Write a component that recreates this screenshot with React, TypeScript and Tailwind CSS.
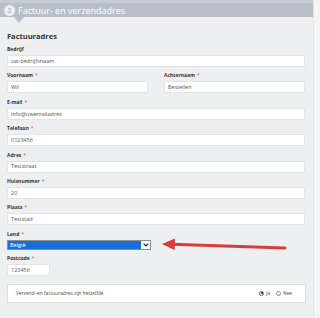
import React from "react";

const font = { fontFamily: '"Open Sans", "Liberation Sans", sans-serif' };

function Label({ text, required = true }: { text: string; required?: boolean }) {
  return (
    <div className="h-[8px] text-[5px] font-bold leading-[8px] text-[#333]">
      {text}
      {required && <span className="ml-[2px] font-normal text-[#e04848]">*</span>}
    </div>
  );
}

function Field({
  label,
  value,
  required = true,
  className = "",
}: {
  label: string;
  value: string;
  required?: boolean;
  className?: string;
}) {
  return (
    <div className={`mb-[4.4px] ${className}`}>
      <Label text={label} required={required} />
      <div className="mt-[2px] flex h-[12px] items-center rounded-[1px] border border-[#e3e4e6] bg-white px-[3px] text-[5.5px] text-[#555]">
        {value}
      </div>
    </div>
  );
}

export default function App() {
  return (
    <div style={font} className="relative flex h-[318px] w-[320px] overflow-hidden bg-[#f4f5f6]">
      <div className="flex w-[314px] flex-col border-r border-[#e2e4e7] bg-[#eeeff1]">
        {/* step header */}
        <div className="relative flex h-[17px] items-center border-t-[3px] border-[#c6ccd4] bg-[#b9bfc9] pl-[4px]">
          <span className="flex h-[11px] w-[11px] items-center justify-center rounded-full bg-[#eceef1] text-[7px] font-bold leading-none text-[#b9bfc9]">
            2
          </span>
          <span className="ml-[3px] text-[9px] leading-none text-white">Factuur- en verzendadres</span>
          <span className="absolute left-[14px] top-[14px] h-0 w-0 border-x-[5px] border-t-[6px] border-x-transparent border-t-[#b9bfc9]" />
        </div>

        <div className="px-[7px] pt-[13px]">
          <h2 className="mb-[3px] text-[7.5px] font-bold leading-[12px] text-[#333]">Factuuradres</h2>

          <Field label="Bedrijf" value="uw-bedrijfsnaam" required={false} className="mr-[1px]" />

          <div className="mr-[1px] flex gap-[16px]">
            <Field label="Voornaam" value="Wil" className="w-[144px]" />
            <Field label="Achternaam" value="Bestellen" className="w-[144px]" />
          </div>

          <Field label="E-mail" value="info@uwemailadres" className="mr-[1px]" />
          <Field label="Telefoon" value="0123456" className="mr-[1px]" />
          <Field label="Adres" value="Teststraat" className="mr-[1px]" />
          <Field label="Huisnummer" value="20" className="mr-[1px]" />
          <Field label="Plaats" value="Teststad" className="mr-[1px]" />

          <div className="mb-[4px]">
            <Label text="Land" />
            <div className="mt-[2px] flex h-[10px] w-[144px] items-stretch border border-[#8a8f96] bg-white">
              <div className="flex flex-1 items-center bg-[#1a6fd6] px-[2px] text-[5.5px] text-white">België</div>
              <div className="flex w-[9px] items-center justify-center bg-white">
                <svg width="6" height="4" viewBox="0 0 6 4">
                  <path d="M0.7 0.7 L3 3 L5.3 0.7" fill="none" stroke="#222" strokeWidth="1.2" />
                </svg>
              </div>
            </div>
          </div>

          <Field label="Postcode" value="123456" className="w-[43px]" />

          <div className="mt-[8px] flex h-[19px] items-center border border-[#dcdee1] bg-white pl-[8px] pr-[13px] text-[4.8px] text-[#444]">
            <span className="flex-1">Verzend- en factuuradres zijn hetzelfde</span>
            <span className="flex items-center gap-[2px]">
              <span className="flex h-[5px] w-[5px] items-center justify-center rounded-full border border-[#666]">
                <span className="h-[2px] w-[2px] rounded-full bg-[#222]" />
              </span>
              Ja
            </span>
            <span className="ml-[6px] flex items-center gap-[2px]">
              <span className="h-[5px] w-[5px] rounded-full border border-[#888] bg-white" />
              Nee
            </span>
          </div>
        </div>
      </div>

      {/* annotation arrow */}
      <svg className="absolute left-0 top-0" width="320" height="318" viewBox="0 0 320 318">
        <line x1="285" y1="248" x2="172" y2="244.3" stroke="#dc3b3b" strokeWidth="3" strokeLinecap="round" />
        <path d="M162 244 L175 238.5 L174.6 250 Z" fill="#dc3b3b" />
      </svg>
    </div>
  );
}
